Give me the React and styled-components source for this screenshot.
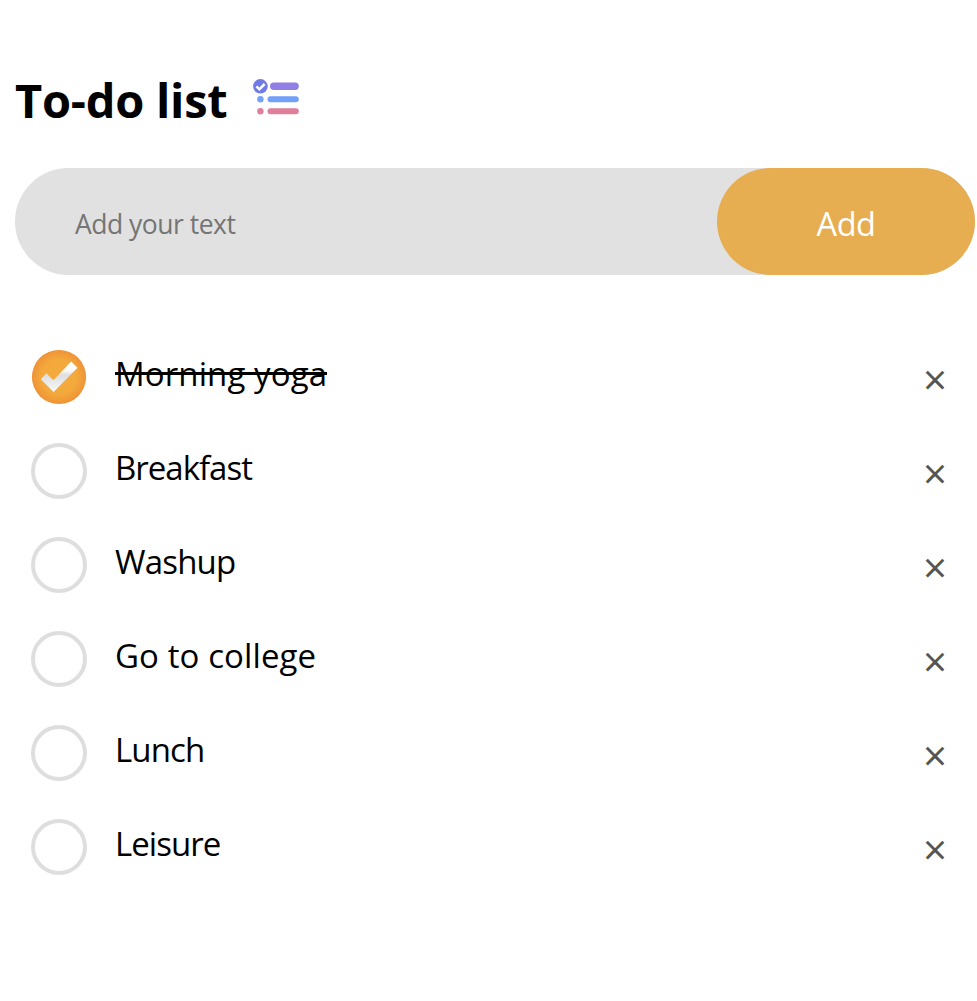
import React, { useState } from "react";
import styled, { createGlobalStyle } from "styled-components";

const GlobalStyle = createGlobalStyle`
  * { box-sizing: border-box; }
  body {
    margin: 0;
    background: #fff;
    color: #000;
    font-family: "Segoe UI", "Open Sans", "Noto Sans", sans-serif;
  }
`;

const Page = styled.main`
  width: 977px;
  min-height: 1001px;
  padding: 67px 2px 0 15px;
  overflow: hidden;
`;

const Header = styled.header`
  display: flex;
  align-items: flex-start;
  height: 101px;
`;

const Title = styled.h1`
  margin: 0;
  width: 237px;
  font-size: 47px;
  line-height: 66px;
  font-weight: 700;
  letter-spacing: -0.25px;
  white-space: nowrap;
`;

const ListIcon = styled.svg`
  display: block;
  width: 48px;
  height: 40px;
  margin-top: 10px;
`;

const Form = styled.form`
  display: flex;
  height: 107px;
  border-radius: 54px;
  background: #e1e1e1;
`;

const Field = styled.input`
  flex: 1;
  min-width: 0;
  border: 0;
  outline: 0;
  background: transparent;
  padding: 4px 20px 0 60px;
  font-family: inherit;
  font-size: 26.5px;
  font-weight: 370;
  letter-spacing: -0.5px;
  &::placeholder { color: #757575; opacity: 1; }
`;

const AddButton = styled.button`
  width: 258px;
  border: 0;
  border-radius: 54px;
  padding: 4px 0 0;
  background: #e6ae50;
  color: #fff;
  font-family: inherit;
  font-size: 32.5px;
  font-weight: 370;
  letter-spacing: -0.5px;
`;

const Tasks = styled.ul`
  list-style: none;
  margin: 55px 0 0;
  padding: 0;
`;

const Task = styled.li`
  display: flex;
  align-items: center;
  height: 94px;
  padding: 0 20px 0 16px;
`;

const Ring = styled.span`
  width: 56px;
  height: 56px;
  border: 4px solid #dedede;
  border-radius: 50%;
`;

const CheckIcon = styled.svg`
  display: block;
  width: 56px;
  height: 56px;
`;

const Label = styled.span`
  position: relative;
  margin-left: 28px;
  margin-right: auto;
  margin-bottom: 6px;
  font-size: 33px;
  font-weight: 370;
  line-height: 46px;
  letter-spacing: ${(p) => p.$tracking}px;

  &::after {
    content: "";
    display: ${(p) => (p.$done ? "block" : "none")};
    position: absolute;
    left: 0;
    right: 0;
    top: 21px;
    height: 3px;
    background: currentColor;
  }
`;

const Remove = styled.button`
  width: 40px;
  height: 54px;
  margin-top: 4px;
  padding: 0;
  border: 0;
  background: transparent;
  color: #555;
  font-family: inherit;
  font-size: 42px;
  font-weight: 370;
  line-height: 54px;
`;

const initialTasks = [
  { text: "Morning yoga", tracking: 0.1, done: true },
  { text: "Breakfast", tracking: -1 },
  { text: "Washup", tracking: -0.8 },
  { text: "Go to college", tracking: 0.1 },
  { text: "Lunch", tracking: -0.9 },
  { text: "Leisure", tracking: -0.95 },
];

function ChecklistDrawing() {
  return (
    <ListIcon viewBox="0 0 48 40">
      <circle cx="8.4" cy="9.3" r="7.3" fill="#717be5" />
      <path d="M4.4 9.3l3 3 5.2-5.3" fill="none" stroke="#fff" strokeWidth="2.5" />
      <rect x="18" y="5.6" width="28.8" height="7.4" rx="3.7" fill="#927fe6" />
      <circle cx="8.4" cy="22.3" r="3.2" fill="#73a0f8" />
      <rect x="15.5" y="19.3" width="31.3" height="6" rx="3" fill="#73a0f8" />
      <circle cx="8.4" cy="34.3" r="3.2" fill="#df7f9c" />
      <rect x="15.5" y="31.3" width="31.3" height="6" rx="3" fill="#df7f9c" />
    </ListIcon>
  );
}

function CheckDrawing() {
  return (
    <CheckIcon viewBox="0 0 56 56">
      <defs>
        <radialGradient id="disc">
          <stop offset="0.65" stopColor="#f3a93b" />
          <stop offset="1" stopColor="#ef9237" />
        </radialGradient>
        <linearGradient id="tick" x1="0" y1="0" x2="0" y2="1">
          <stop offset="0" stopColor="#fff" />
          <stop offset="0.3" stopColor="#fafafa" />
          <stop offset="0.45" stopColor="#dedede" />
          <stop offset="1" stopColor="#fafafa" />
        </linearGradient>
      </defs>
      <circle cx="28" cy="28" r="27.1" fill="url(#disc)" />
      <path d="M9.8 30.3l5.6-6 7 7 17.8-18.8 6.3 6.2-23.9 24.3z" fill="url(#tick)" />
    </CheckIcon>
  );
}

export default function App() {
  const [tasks, setTasks] = useState(initialTasks);
  const [draft, setDraft] = useState("");

  const add = (e) => {
    e.preventDefault();
    if (!draft.trim()) return;
    setTasks([...tasks, { text: draft, tracking: 0 }]);
    setDraft("");
  };
  const toggle = (i) => setTasks(tasks.map((t, n) => (n === i ? { ...t, done: !t.done } : t)));
  const remove = (i) => setTasks(tasks.filter((_, n) => n !== i));

  return (
    <>
      <GlobalStyle />
      <Page>
        <Header>
          <Title>To-do list</Title>
          <ChecklistDrawing />
        </Header>
        <Form onSubmit={add}>
          <Field placeholder="Add your text" value={draft} onChange={(e) => setDraft(e.target.value)} />
          <AddButton>Add</AddButton>
        </Form>
        <Tasks>
          {tasks.map((t, i) => (
            <Task key={i} onClick={() => toggle(i)}>
              {t.done ? <CheckDrawing /> : <Ring />}
              <Label $done={t.done} $tracking={t.tracking}>{t.text}</Label>
              <Remove onClick={(e) => { e.stopPropagation(); remove(i); }}>×</Remove>
            </Task>
          ))}
        </Tasks>
      </Page>
    </>
  );
}
